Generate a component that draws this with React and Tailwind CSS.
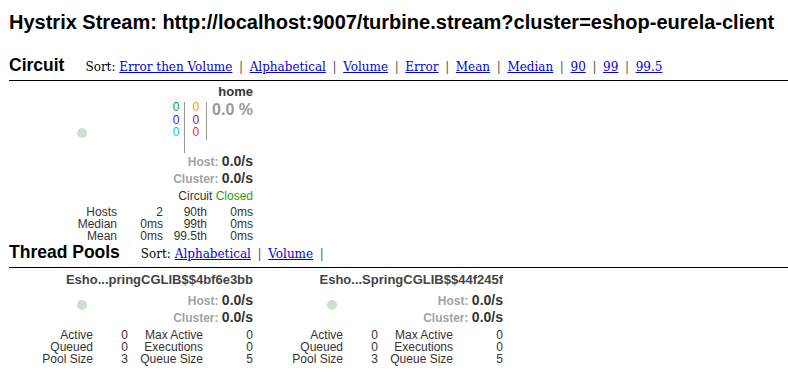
import React from "react";

const circuitSort = ["Error then Volume", "Alphabetical", "Volume", "Error", "Mean", "Median", "90", "99", "99.5"];
const poolSort = ["Alphabetical", "Volume"];

function SectionHeader({ title, links, trailingBar }) {
    return (
        <div className="ml-[9px] flex items-baseline border-b border-black pb-[4px]">
            <h2 className="text-[17.5px] font-bold leading-[20px] text-black">{title}</h2>
            <div className="ml-[21px] font-['DejaVu_Serif',serif] text-[12px] text-black">
                Sort:{" "}
                {links.map((l, i) => (
                    <span key={l}>
                        <a href="#" className="text-[#0000ee] underline">{l}</a>
                        {(i < links.length - 1 || trailingBar) && (
                            <span className="text-[#555]"> <span className="mx-[2.8px]">|</span> </span>
                        )}
                    </span>
                ))}
            </div>
        </div>
    );
}

function Rate({ label, value }) {
    return (
        <div className="text-right text-[14px]">
            <span className="text-[12px] font-bold leading-none text-[#a3a3a3]">{label}: </span>
            <span className="font-bold text-[#333]">{value}</span>
        </div>
    );
}

function Dot({ top }) {
    return <div className={`ml-[69px] h-[10px] w-[10px] shrink-0 rounded-full bg-[#cfdfcf] ${top}`} />;
}

function CircuitMonitor() {
    const rows = [
        ["Hosts", "2", "90th", "0ms"],
        ["Median", "0ms", "99th", "0ms"],
        ["Mean", "0ms", "99.5th", "0ms"],
    ];
    return (
        <div className="ml-[8px] w-[245px] pt-[3px] text-[#333]">
            <div className="text-right text-[13px] font-bold leading-[15px]">home</div>

            <div className="mt-[2px] flex items-start">
                <Dot top="mt-[27px]" />
                <div className="ml-auto flex items-start">
                    <div className="text-right text-[12px] leading-[12.5px]">
                        <div className="text-[#119911]">0</div>
                        <div className="text-[#2222ff]">0</div>
                        <div className="text-[#11cc99]">0</div>
                    </div>
                    <div className="ml-[5px] mt-px h-[51px] w-px bg-[#999]" />
                    <div className="ml-[7px] text-right text-[12px] leading-[12.5px]">
                        <div className="text-[#ff9900]">0</div>
                        <div className="text-[#990099]">0</div>
                        <div className="text-[#ff2222]">0</div>
                    </div>
                    <div className="ml-[7px] mt-px h-[38px] w-px bg-[#999]" />
                    <div className="ml-[5px] text-[16px] font-bold leading-[18px] text-[#999]">0.0 %</div>
                </div>
            </div>

            <div className="leading-[17px]">
                <Rate label="Host" value="0.0/s" />
                <Rate label="Cluster" value="0.0/s" />
            </div>

            <div className="mt-[2px] text-right text-[12px] leading-[15px]">
                Circuit <span className="text-[#22a022]">Closed</span>
            </div>

            <div className="mt-[2px] grid grid-cols-[109px_46px_44px_46px] text-right text-[12px] leading-[12px]">
                {rows.map((r) => r.map((c, i) => <div key={r[0] + i}>{c}</div>))}
            </div>
        </div>
    );
}

function PoolMonitor({ name }) {
    const rows = [
        ["Active", "0", "Max Active", "0"],
        ["Queued", "0", "Executions", "0"],
        ["Pool Size", "3", "Queue Size", "5"],
    ];
    return (
        <div className="mr-[5px] w-[245px] pt-[4px] text-[#333]">
            <div className="text-right text-[13px] font-bold leading-[15px] text-[#444]">{name}</div>
            <div className="mt-[5px] flex items-start">
                <Dot top="mt-[8px]" />
                <div className="ml-auto leading-[16.5px]">
                    <Rate label="Host" value="0.0/s" />
                    <Rate label="Cluster" value="0.0/s" />
                </div>
            </div>
            <div className="mt-[4px] grid grid-cols-[85px_35px_75px_50px] text-right text-[12px] leading-[12px]">
                {rows.map((r) => r.map((c, i) => <div key={r[0] + i}>{c}</div>))}
            </div>
        </div>
    );
}

export default function App() {
    return (
        <div className="min-h-screen bg-white font-['Liberation_Sans',Arial,sans-serif]">
            <h1 className="pl-[9px] pt-[11px] text-[20px] font-bold leading-[23px] text-black">
                Hystrix Stream: http://localhost:9007/turbine.stream?cluster=eshop-eurela-client
            </h1>

            <div className="mt-[21px]">
                <SectionHeader title="Circuit" links={circuitSort} />
            </div>
            <CircuitMonitor />

            <div>
                <SectionHeader title="Thread Pools" links={poolSort} trailingBar />
            </div>
            <div className="ml-[8px] flex">
                <PoolMonitor name="Esho...pringCGLIB$$4bf6e3bb" />
                <PoolMonitor name="Esho...SpringCGLIB$$44f245f" />
            </div>
        </div>
    );
}
